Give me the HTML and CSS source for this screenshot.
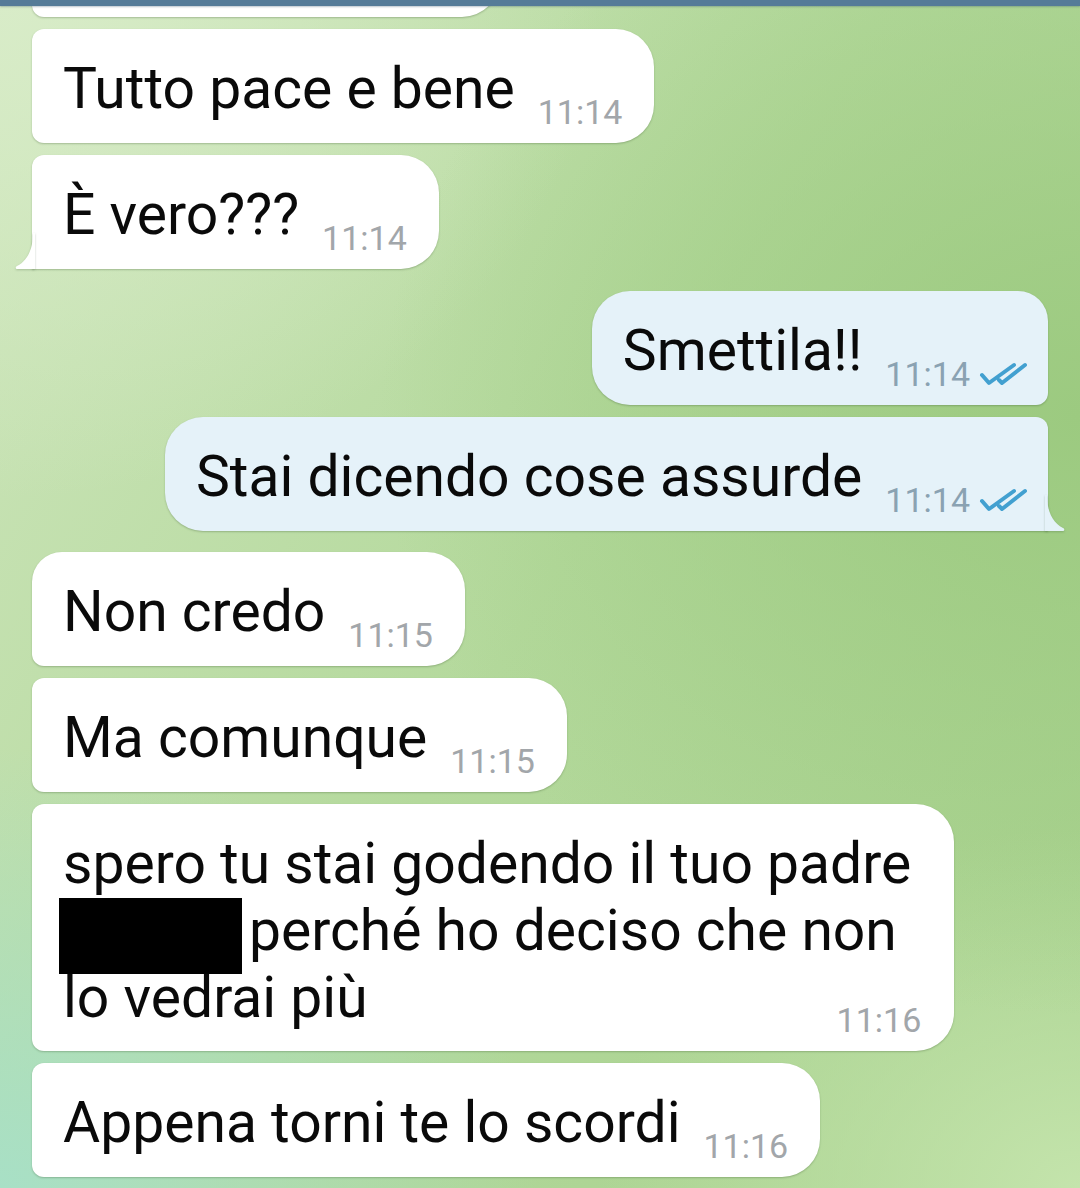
FILE: index.html
```html
<!DOCTYPE html>
<html lang="it">
<head>
    <meta charset="UTF-8">
    <meta name="viewport" content="width=device-width, initial-scale=1.0">
    <title>Chat</title>
    <link rel="stylesheet" href="styles.css">
</head>
<body>
    <div class="screen">
        <div class="topbar"></div>

        <main class="chat">
            <div class="bubble in mid partial"></div>

            <div class="bubble in mid">
                <span class="text">Tutto pace e bene</span>
                <span class="meta"><span class="time">11:14</span></span>
            </div>
            <div class="bubble in last">
                <span class="text">È vero???</span>
                <span class="meta"><span class="time">11:14</span></span>
                <svg class="tail" width="20" height="36" viewBox="0 0 20 36">
                    <path d="M18 0 C18 17 12 28 2 33 C0 34 0.4 36 2.5 36 H20 V0 Z"/>
                </svg>
            </div>

            <div class="bubble out first">
                <span class="text">Smettila!!</span>
                <span class="meta">
                    <span class="time">11:14</span>
                    <svg class="checks" width="50" height="28" viewBox="0 0 50 28">
                        <path d="M4 14 L11 22 L36 4 M21 19 L24 22 L47 4"/>
                    </svg>
                </span>
            </div>
            <div class="bubble out last">
                <span class="text">Stai dicendo cose assurde</span>
                <span class="meta">
                    <span class="time">11:14</span>
                    <svg class="checks" width="50" height="28" viewBox="0 0 50 28">
                        <path d="M4 14 L11 22 L36 4 M21 19 L24 22 L47 4"/>
                    </svg>
                </span>
                <svg class="tail" width="20" height="36" viewBox="0 0 20 36">
                    <path d="M2 0 C2 17 8 28 18 33 C20 34 19.6 36 17.5 36 H0 V0 Z"/>
                </svg>
            </div>

            <div class="bubble in first">
                <span class="text">Non credo</span>
                <span class="meta"><span class="time">11:15</span></span>
            </div>
            <div class="bubble in mid">
                <span class="text">Ma comunque</span>
                <span class="meta"><span class="time">11:15</span></span>
            </div>
            <div class="bubble in mid long">
                <span class="text">spero tu stai godendo il tuo padre<br><span class="redact"></span>perché ho deciso che non<br>lo vedrai più</span>
                <span class="meta"><span class="time">11:16</span></span>
            </div>
            <div class="bubble in mid">
                <span class="text">Appena torni te lo scordi</span>
                <span class="meta"><span class="time">11:16</span></span>
            </div>
        </main>
    </div>
</body>
</html>
```

FILE: styles.css
```css
:root {
    --in-bg: #ffffff;
    --out-bg: #e5f2f9;
    --text-color: #0a0a0a;
    --time-in: #a2a6aa;
    --time-out: #8aa2b2;
    --check-color: #42a0d0;
    --shadow: 0 1px 2px rgba(40, 70, 30, 0.28);
}

* {
    margin: 0;
    padding: 0;
    box-sizing: border-box;
}

body {
    font-family: Roboto, 'Noto Sans', sans-serif;
    color: var(--text-color);
    overflow: hidden;
}

.screen {
    width: 1080px;
    height: 1188px;
    overflow: hidden;
    background:
        radial-gradient(ellipse 700px 600px at 100% 35%, rgba(156, 202, 128, 1) 0%, rgba(156, 202, 128, 0) 100%),
        radial-gradient(ellipse 540px 440px at 0% 100%, rgba(168, 224, 198, 1) 0%, rgba(168, 224, 198, 0) 100%),
        radial-gradient(ellipse 480px 360px at 100% 100%, rgba(196, 228, 172, 1) 0%, rgba(196, 228, 172, 0) 100%),
        radial-gradient(ellipse 600px 500px at 0% 0%, rgba(216, 236, 200, 1) 0%, rgba(216, 236, 200, 0) 100%),
        linear-gradient(120deg, #cde5bb 0%, #b4d99c 50%, #a6d08c 100%);
}

.topbar {
    position: relative;
    z-index: 2;
    height: 6px;
    background-color: #557b98;
    box-shadow: 0 1px 2px rgba(60, 90, 110, 0.35);
}

.chat {
    display: flex;
    flex-direction: column;
    align-items: flex-start;
    padding: 0 32px;
}

.bubble {
    position: relative;
    display: flex;
    align-items: flex-end;
    padding: 26px 32px 21px 31px;
    margin-top: 12px;
    box-shadow: var(--shadow);
}

.bubble.in {
    background-color: var(--in-bg);
    border-radius: 12px 38px 38px 12px;
}

.bubble.in.first {
    border-top-left-radius: 30px;
    margin-top: 21px;
}

.bubble.in.last {
    border-bottom-left-radius: 0;
}

.bubble.out {
    align-self: flex-end;
    background-color: var(--out-bg);
    border-radius: 38px 12px 12px 38px;
    padding-right: 20px;
}

.bubble.out.first {
    border-top-right-radius: 30px;
    margin-top: 22px;
}

.bubble.out.last {
    border-bottom-right-radius: 0;
}

.bubble.partial {
    width: 468px;
    height: 114px;
    margin-top: -103px;
}

.text {
    font-size: 57px;
    line-height: 67px;
    white-space: nowrap;
}

.meta {
    display: flex;
    align-items: center;
    gap: 8px;
    margin-left: 23px;
    margin-bottom: -10px;
    height: 40px;
}

.time {
    font-size: 34px;
    line-height: 40px;
    color: var(--time-in);
}

.out .time {
    color: var(--time-out);
}

.checks {
    margin-top: 2px;
}

.checks path {
    fill: none;
    stroke: var(--check-color);
    stroke-width: 4;
    stroke-linecap: round;
    stroke-linejoin: round;
}

.tail {
    position: absolute;
    bottom: 0;
}

.in .tail {
    left: -17px;
    fill: var(--in-bg);
    filter: drop-shadow(0 1px 1px rgba(40, 70, 30, 0.25));
}

.out .tail {
    right: -17px;
    fill: var(--out-bg);
    filter: drop-shadow(0 1px 1px rgba(40, 70, 30, 0.25));
}

.bubble.long {
    flex-direction: column;
    align-items: stretch;
    padding-right: 43px;
}

.bubble.long .meta {
    align-self: flex-end;
    margin-top: -31px;
    margin-right: -10px;
}

.redact {
    display: inline-block;
    width: 183px;
    height: 76px;
    margin: 0 7px -12px -4px;
    vertical-align: -12px;
    background-color: #000;
}
```
